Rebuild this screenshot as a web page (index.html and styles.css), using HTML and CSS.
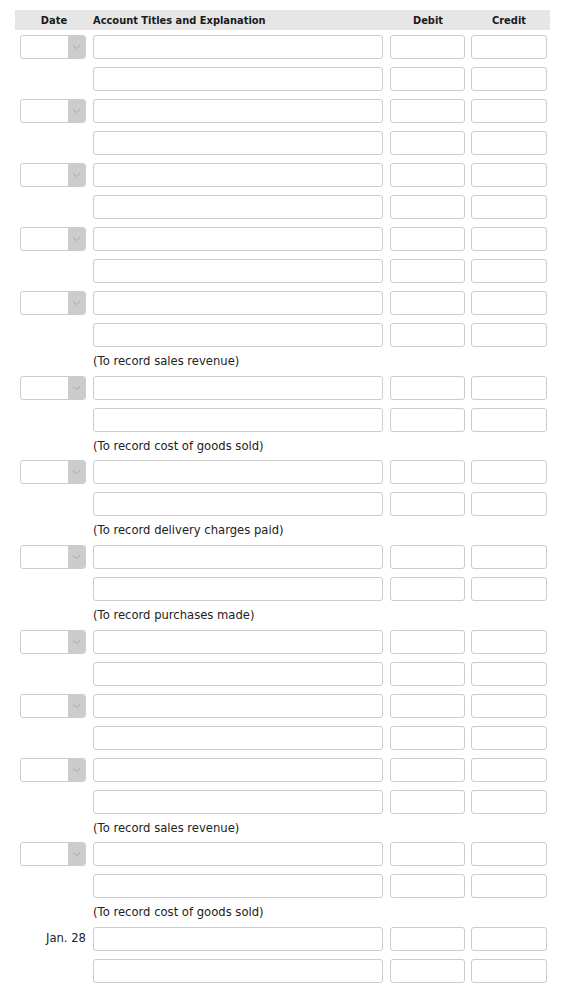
FILE: index.html
```html
<!DOCTYPE html>
<html>
<head>
<meta charset="utf-8">
<link rel="stylesheet" href="styles.css">
</head>
<body>
<div class="journal">
  <div class="head">
    <div class="h-date">Date</div>
    <div class="h-acct">Account Titles and Explanation</div>
    <div class="h-num h-debit">Debit</div>
    <div class="h-num h-credit">Credit</div>
  </div>

  <div class="row"><div class="c-date"><span class="sel"><span class="arr"><svg width="9" height="6" viewBox="0 0 9 6"><path d="M1 1.5 L4.5 4.5 L8 1.5" fill="none" stroke="#a8a8a8" stroke-width="1"/></svg></span></span></div><div class="c-acct"><span class="box acct"></span></div><div class="c-num"><span class="box deb"></span></div><div class="c-num"><span class="box cred"></span></div></div>
  <div class="row"><div class="c-date"></div><div class="c-acct"><span class="box acct"></span></div><div class="c-num"><span class="box deb"></span></div><div class="c-num"><span class="box cred"></span></div></div>

  <div class="row"><div class="c-date"><span class="sel"><span class="arr"><svg width="9" height="6" viewBox="0 0 9 6"><path d="M1 1.5 L4.5 4.5 L8 1.5" fill="none" stroke="#a8a8a8" stroke-width="1"/></svg></span></span></div><div class="c-acct"><span class="box acct"></span></div><div class="c-num"><span class="box deb"></span></div><div class="c-num"><span class="box cred"></span></div></div>
  <div class="row"><div class="c-date"></div><div class="c-acct"><span class="box acct"></span></div><div class="c-num"><span class="box deb"></span></div><div class="c-num"><span class="box cred"></span></div></div>

  <div class="row"><div class="c-date"><span class="sel"><span class="arr"><svg width="9" height="6" viewBox="0 0 9 6"><path d="M1 1.5 L4.5 4.5 L8 1.5" fill="none" stroke="#a8a8a8" stroke-width="1"/></svg></span></span></div><div class="c-acct"><span class="box acct"></span></div><div class="c-num"><span class="box deb"></span></div><div class="c-num"><span class="box cred"></span></div></div>
  <div class="row"><div class="c-date"></div><div class="c-acct"><span class="box acct"></span></div><div class="c-num"><span class="box deb"></span></div><div class="c-num"><span class="box cred"></span></div></div>

  <div class="row"><div class="c-date"><span class="sel"><span class="arr"><svg width="9" height="6" viewBox="0 0 9 6"><path d="M1 1.5 L4.5 4.5 L8 1.5" fill="none" stroke="#a8a8a8" stroke-width="1"/></svg></span></span></div><div class="c-acct"><span class="box acct"></span></div><div class="c-num"><span class="box deb"></span></div><div class="c-num"><span class="box cred"></span></div></div>
  <div class="row"><div class="c-date"></div><div class="c-acct"><span class="box acct"></span></div><div class="c-num"><span class="box deb"></span></div><div class="c-num"><span class="box cred"></span></div></div>

  <div class="row"><div class="c-date"><span class="sel"><span class="arr"><svg width="9" height="6" viewBox="0 0 9 6"><path d="M1 1.5 L4.5 4.5 L8 1.5" fill="none" stroke="#a8a8a8" stroke-width="1"/></svg></span></span></div><div class="c-acct"><span class="box acct"></span></div><div class="c-num"><span class="box deb"></span></div><div class="c-num"><span class="box cred"></span></div></div>
  <div class="row"><div class="c-date"></div><div class="c-acct"><span class="box acct"></span></div><div class="c-num"><span class="box deb"></span></div><div class="c-num"><span class="box cred"></span></div></div>
  <div class="note">(To record sales revenue)</div>

  <div class="row"><div class="c-date"><span class="sel"><span class="arr"><svg width="9" height="6" viewBox="0 0 9 6"><path d="M1 1.5 L4.5 4.5 L8 1.5" fill="none" stroke="#a8a8a8" stroke-width="1"/></svg></span></span></div><div class="c-acct"><span class="box acct"></span></div><div class="c-num"><span class="box deb"></span></div><div class="c-num"><span class="box cred"></span></div></div>
  <div class="row"><div class="c-date"></div><div class="c-acct"><span class="box acct"></span></div><div class="c-num"><span class="box deb"></span></div><div class="c-num"><span class="box cred"></span></div></div>
  <div class="note">(To record cost of goods sold)</div>

  <div class="row"><div class="c-date"><span class="sel"><span class="arr"><svg width="9" height="6" viewBox="0 0 9 6"><path d="M1 1.5 L4.5 4.5 L8 1.5" fill="none" stroke="#a8a8a8" stroke-width="1"/></svg></span></span></div><div class="c-acct"><span class="box acct"></span></div><div class="c-num"><span class="box deb"></span></div><div class="c-num"><span class="box cred"></span></div></div>
  <div class="row"><div class="c-date"></div><div class="c-acct"><span class="box acct"></span></div><div class="c-num"><span class="box deb"></span></div><div class="c-num"><span class="box cred"></span></div></div>
  <div class="note">(To record delivery charges paid)</div>

  <div class="row"><div class="c-date"><span class="sel"><span class="arr"><svg width="9" height="6" viewBox="0 0 9 6"><path d="M1 1.5 L4.5 4.5 L8 1.5" fill="none" stroke="#a8a8a8" stroke-width="1"/></svg></span></span></div><div class="c-acct"><span class="box acct"></span></div><div class="c-num"><span class="box deb"></span></div><div class="c-num"><span class="box cred"></span></div></div>
  <div class="row"><div class="c-date"></div><div class="c-acct"><span class="box acct"></span></div><div class="c-num"><span class="box deb"></span></div><div class="c-num"><span class="box cred"></span></div></div>
  <div class="note">(To record purchases made)</div>

  <div class="row"><div class="c-date"><span class="sel"><span class="arr"><svg width="9" height="6" viewBox="0 0 9 6"><path d="M1 1.5 L4.5 4.5 L8 1.5" fill="none" stroke="#a8a8a8" stroke-width="1"/></svg></span></span></div><div class="c-acct"><span class="box acct"></span></div><div class="c-num"><span class="box deb"></span></div><div class="c-num"><span class="box cred"></span></div></div>
  <div class="row"><div class="c-date"></div><div class="c-acct"><span class="box acct"></span></div><div class="c-num"><span class="box deb"></span></div><div class="c-num"><span class="box cred"></span></div></div>

  <div class="row"><div class="c-date"><span class="sel"><span class="arr"><svg width="9" height="6" viewBox="0 0 9 6"><path d="M1 1.5 L4.5 4.5 L8 1.5" fill="none" stroke="#a8a8a8" stroke-width="1"/></svg></span></span></div><div class="c-acct"><span class="box acct"></span></div><div class="c-num"><span class="box deb"></span></div><div class="c-num"><span class="box cred"></span></div></div>
  <div class="row"><div class="c-date"></div><div class="c-acct"><span class="box acct"></span></div><div class="c-num"><span class="box deb"></span></div><div class="c-num"><span class="box cred"></span></div></div>

  <div class="row"><div class="c-date"><span class="sel"><span class="arr"><svg width="9" height="6" viewBox="0 0 9 6"><path d="M1 1.5 L4.5 4.5 L8 1.5" fill="none" stroke="#a8a8a8" stroke-width="1"/></svg></span></span></div><div class="c-acct"><span class="box acct"></span></div><div class="c-num"><span class="box deb"></span></div><div class="c-num"><span class="box cred"></span></div></div>
  <div class="row"><div class="c-date"></div><div class="c-acct"><span class="box acct"></span></div><div class="c-num"><span class="box deb"></span></div><div class="c-num"><span class="box cred"></span></div></div>
  <div class="note">(To record sales revenue)</div>

  <div class="row"><div class="c-date"><span class="sel"><span class="arr"><svg width="9" height="6" viewBox="0 0 9 6"><path d="M1 1.5 L4.5 4.5 L8 1.5" fill="none" stroke="#a8a8a8" stroke-width="1"/></svg></span></span></div><div class="c-acct"><span class="box acct"></span></div><div class="c-num"><span class="box deb"></span></div><div class="c-num"><span class="box cred"></span></div></div>
  <div class="row"><div class="c-date"></div><div class="c-acct"><span class="box acct"></span></div><div class="c-num"><span class="box deb"></span></div><div class="c-num"><span class="box cred"></span></div></div>
  <div class="note">(To record cost of goods sold)</div>

  <div class="row"><div class="c-date date-text">Jan. 28</div><div class="c-acct"><span class="box acct"></span></div><div class="c-num"><span class="box deb"></span></div><div class="c-num"><span class="box cred"></span></div></div>
  <div class="row"><div class="c-date"></div><div class="c-acct"><span class="box acct"></span></div><div class="c-num"><span class="box deb"></span></div><div class="c-num"><span class="box cred"></span></div></div>
</div>
</body>
</html>
```

FILE: styles.css
```css
html, body {
  margin: 0;
  padding: 0;
  background: #ffffff;
}

body {
  font-family: "DejaVu Sans", Verdana, sans-serif;
  font-size: 11.6px;
  color: #222222;
}

.journal {
  width: 535px;
  margin: 10px 0 0 15px;
}

.head,
.row {
  display: grid;
  grid-template-columns: 78px 297px 81px 79px;
}

.head {
  height: 20px;
  align-items: center;
  background: #e6e6e6;
  font-weight: bold;
  font-size: 9.9px;
  color: #1a1a1a;
  margin-bottom: 5px;
}

.h-date {
  text-align: center;
}

.h-num {
  text-align: center;
}

.h-debit {
  padding-right: 5px;
}

.h-credit {
  padding-right: 3px;
}

.row {
  height: 32px;
  align-items: start;
}

.c-date {
  padding-left: 5px;
}

.box {
  display: block;
  height: 24px;
  box-sizing: border-box;
  border: 1px solid #cccccc;
  border-radius: 3px;
  background: #ffffff;
}

.acct { width: 290px; }
.deb { width: 75px; }
.cred { width: 76px; }

.sel {
  display: flex;
  justify-content: flex-end;
  width: 66px;
  height: 24px;
  box-sizing: border-box;
  border: 1px solid #cccccc;
  border-radius: 3px;
  background: #ffffff;
  overflow: hidden;
}

.arr {
  width: 17px;
  height: 100%;
  background: #cccccc;
  display: flex;
  align-items: center;
  justify-content: center;
}

.date-text {
  padding: 0 7px 0 0;
  text-align: right;
  line-height: 22px;
  color: #222222;
}

.note {
  height: 28.67px;
  margin-top: -8px;
  padding-left: 78px;
  line-height: 28px;
  color: #222222;
}
```
